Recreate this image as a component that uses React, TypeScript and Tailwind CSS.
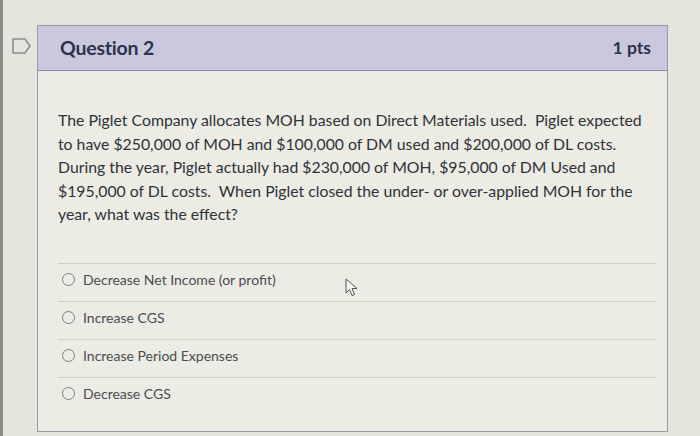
import React from 'react';

const lines = [
  'The Piglet Company allocates MOH based on Direct Materials used.  Piglet expected',
  'to have $250,000 of MOH and $100,000 of DM used and $200,000 of DL costs.',
  'During the year, Piglet actually had $230,000 of MOH, $95,000 of DM Used and',
  '$195,000 of DL costs.  When Piglet closed the under- or over-applied MOH for the',
  'year, what was the effect?',
];

const answers = [
  'Decrease Net Income (or profit)',
  'Increase CGS',
  'Increase Period Expenses',
  'Decrease CGS',
];

export default function App() {
  return (
    <div
      className="relative flex w-[700px] h-[436px] overflow-hidden bg-[#e5e4dd]"
      style={{ fontFamily: 'Lato, "Open Sans", sans-serif' }}
    >
      {/* dark edge on the left */}
      <div className="w-[3px] bg-[#8c8b85]" />

      {/* bookmark flag */}
      <div className="w-[34px] pt-[37px] pl-[8px]">
        <svg width="22" height="18" viewBox="0 0 22 18">
          <path d="M2 2 H14 L19 9 L14 16 H2 Z" fill="none" stroke="#8d8d8d" strokeWidth="1.6" strokeLinejoin="round" />
        </svg>
      </div>

      <div className="mt-[25px] w-[631px] h-[407px] border border-[#9b9aa3] bg-[#ecebe4] flex flex-col">
        <div className="h-[45px] flex items-center justify-between pl-[22px] pr-[16px] bg-[#c9c8df] border-b border-[#8f8ea0]">
          <span className="text-[19.5px] font-bold text-[#2d3349] tracking-[-0.2px]">Question 2</span>
          <span className="text-[17.5px] font-bold text-[#2d3349]">1 pts</span>
        </div>

        <div className="pl-[20px] pr-[10px] pt-[37px]">
          <p className="text-[15.8px] leading-[23.5px] text-[#2f3338] whitespace-pre">
            {lines.map((l) => (
              <span key={l} className="block">{l}</span>
            ))}
          </p>

          <div className="mt-[37px] w-[598px]">
            {answers.map((a) => (
              <div key={a} className="h-[38px] pb-[5px] flex items-center border-t border-[#cfcec6]">
                <span className="ml-[4px] w-[13px] h-[13px] rounded-full border-[1.5px] border-[#7c7c7c]" />
                <span className="ml-[8px] text-[14px] text-[#4a4d52]">{a}</span>
              </div>
            ))}
          </div>
        </div>
      </div>

      {/* mouse cursor */}
      <svg className="absolute left-[345px] top-[278px]" width="14" height="20" viewBox="0 0 14 20">
        <path d="M1 1 L1 15 L4.5 11.5 L7 17.5 L9.5 16.5 L7 10.5 L12 10.5 Z" fill="#f5f5f2" stroke="#555" strokeWidth="1" strokeLinejoin="round" />
      </svg>
    </div>
  );
}
